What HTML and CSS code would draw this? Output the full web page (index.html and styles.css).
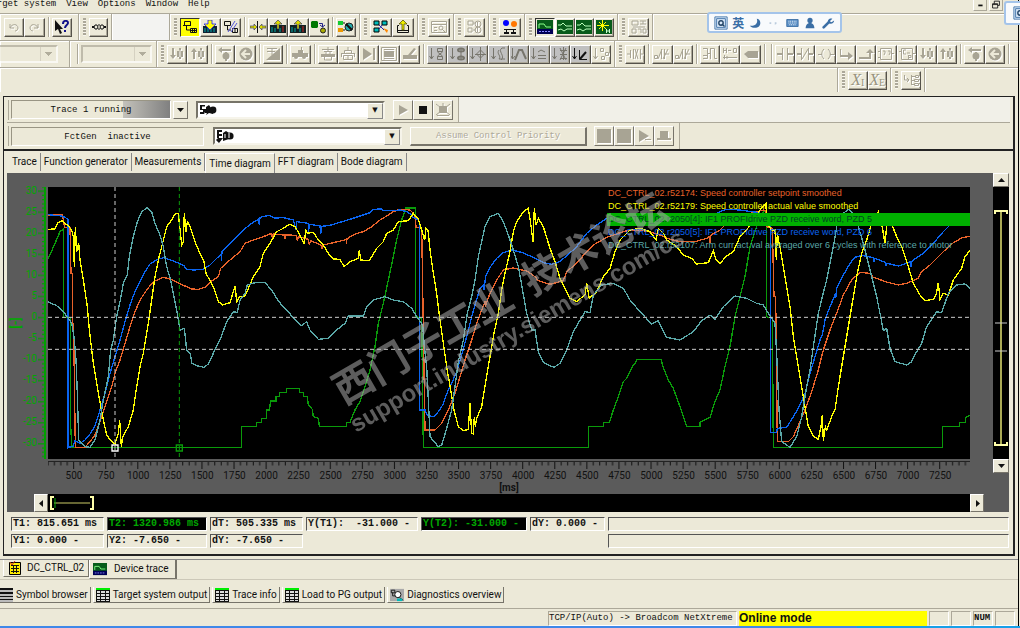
FILE: index.html
```html
<!DOCTYPE html>
<html lang="en">
<head>
<meta charset="utf-8">
<title>Device trace</title>
<link rel="stylesheet" href="styles.css">
</head>
<body>
<svg class="defs" aria-hidden="true">
  <symbol id="undo" viewBox="0 0 16 14"><path d="M4 4v4h4M4 8c2-5 8-4 8 0 0 2-2 3-3 3" class="l"/></symbol>
  <symbol id="redo" viewBox="0 0 16 14"><path d="M12 4v4H8M12 8C10 3 4 4 4 8c0 2 2 3 3 3" class="l"/></symbol>
  <symbol id="help" viewBox="0 0 16 14"><path d="M1 0v11l3-2 2 5 2-1-2-4h3z"/><path d="M9 4c0-4 5-4 5-1 0 2-3 2-3 5" stroke="#118" stroke-width="2" fill="none"/><path d="M10 10h2v2h-2z" fill="#118"/></symbol>
  <symbol id="chain" viewBox="0 0 16 14"><path d="M1 7h2M13 7h2" class="l2"/><path d="M4 5h2l1 2-1 2H4L3 7zM10 5h2l1 2-1 2h-2L9 7z" class="l"/><path d="M7 5h2M7 9h2" class="l"/></symbol>
  <symbol id="online" viewBox="0 0 16 14"><path d="M2.500 1.500h6v4h-6zM4.500 6v4H9" class="l"/><path d="M1 5h8v1H1z"/><path d="M8.500 8.500h6v4h-6zM10.500 8v5M12.500 8v5M8 10.500h7" class="l"/></symbol>
  <symbol id="down" viewBox="0 0 16 14"><path d="M1 6h14v7H1z" fill="#123"/><path d="M3 12V8M6 12V8M9 12V8M12 12V8" stroke="#0aa" /><path d="M6 0h4v4h4L8 10 2 4h4z" fill="#ff0" stroke="#00f" stroke-width=".7"/></symbol>
  <symbol id="offline" viewBox="0 0 16 14"><path d="M1.500 1.500h6v4h-6zM4.500 6v4H8" class="l"/><path d="M9.500 8.500h5v4h-5zM12 8v5" class="l"/><path d="M5 12 12 1M8 12l6-9" stroke="#55d"/></symbol>
  <symbol id="link" viewBox="0 0 16 14"><path d="M0 6h4V4l3 3-3 3V8H0zM16 6h-4V4L9 7l3 3V8h4z" fill="#dd0" stroke="#226" stroke-width=".6"/><path d="M7.500 1v12" class="l"/></symbol>
  <symbol id="load" viewBox="0 0 16 14"><path d="M0 5h16v8H0z" fill="#122"/><path d="M2 12V7M5 12V8M10 12V8" stroke="#0aa"/><path d="M13 6v6" stroke="#c22"/><path d="M8 0l4 4H9v5H7V4H4z" fill="#dd0" stroke="#226" stroke-width=".6"/></symbol>
  <symbol id="copyram" viewBox="0 0 16 14"><path d="M1 1h5l1 1v5L6 8H1L0 7V2z" fill="#070"/><path d="M8 3.500h3.500V7M9 5l2.500 2L14 5" stroke="#228" fill="none"/><circle cx="12" cy="10.500" r="2.500" fill="#aa0" stroke="#222"/></symbol>
  <symbol id="stopnet" viewBox="0 0 16 14"><path d="M0 1h5v4H0z" fill="#1c3"/><path d="M0 8h5v4H0z" fill="#e90"/><path d="M5 3h2M5 10h2" class="l"/><circle cx="11" cy="7" r="4" fill="#2aa" stroke="#222"/><path d="M8 4l6 6" class="l2"/></symbol>
  <symbol id="net" viewBox="0 0 16 14"><path d="M1 1h5v4H1zM9 1h5v4H9zM1 8h5v4H1z" fill="#0bb" stroke="#000"/><path d="M6 5l5 5M9 5L6 9" stroke="#22a"/><path d="M10 8l4 5 1-3z" fill="#f80"/></symbol>
  <symbol id="export" viewBox="0 0 16 14"><path d="M4 5.500H2.500v7h11v-7H12M2 10.500h12" class="l"/><path d="M8 0l4 4H9v6H7V4H4z" fill="#ee0" stroke="#440" stroke-width=".7"/></symbol>
  <symbol id="find" viewBox="0 0 16 14"><path d="M.500 1.500h15v11H.500zM1 4.500h14M3 7.500h3M3 10.500h3" class="l"/><circle cx="10" cy="8" r="2" class="l"/><path d="M11 9l3 3" class="l"/></symbol>
  <symbol id="gears" viewBox="0 0 16 14"><path d="M1 1h5v4H1zM1 8h4v4H1zM6 3h3M6 10h3" class="l"/><circle cx="11" cy="4" r="3" class="l"/><circle cx="11" cy="10" r="3" class="l"/><path d="M10.500 2v10" class="l"/></symbol>
  <symbol id="users" viewBox="0 0 16 14"><circle cx="4" cy="3" r="3" fill="#00f"/><circle cx="12" cy="4" r="3" fill="#f70"/><path d="M2 9h12v1H2zM4 9h1v4H4zM11 9h1v4h-1zM2 12h5v2H2zM9 12h5v2H9z"/></symbol>
  <symbol id="trace" viewBox="0 0 16 14"><path d="M0 0h16v14H0z" fill="#075c1a"/><path d="M0 9h16v5H0z" fill="#005"/><path d="M2 8V4h5l2 3h5" stroke="#8f8" fill="none"/><path d="M2 11.500h12" stroke="#88f" stroke-dasharray="2 1"/></symbol>
  <symbol id="scope" viewBox="0 0 16 14"><path d="M0 0h16v14H0z" fill="#075c1a"/><path d="M1 5h3l2-2 3 3h6M1 10l3-1 3 2 3-2h5" stroke="#bfb" fill="none"/></symbol>
  <symbol id="spark" viewBox="0 0 16 14"><path d="M0 0h16v14H0z" fill="#075c1a"/><path d="M6.500 0v11M1 5.500h12M3 2l7 7M10 2L3 9" stroke="#ff0"/><path d="M10.500 9v4M13.500 9v4M11 11h3" stroke="#cfc"/></symbol>
  <symbol id="blocks" viewBox="0 0 16 14"><path d="M1 1h6v4H1zM9 1h6M9 4h6M12 1v3M2 7h12M1 9h4v4H1zM7 9h3v4M12 9h3v4h-3z" class="l"/></symbol>
  <symbol id="d01" viewBox="0 0 16 14"><path d="M3 1h2v7h2l-3 4-3-4h2zM10 1h2v2h-2z"/><path d="M10 10h2v2h-2zM8 4h2v6H8zM12 4h2v6h-2zM10.500 3h1v8h-1z"/></symbol>
  <symbol id="u01" viewBox="0 0 16 14"><path d="M3 12h2V5h2L4 1 1 5h2zM10 1h2v2h-2z"/><path d="M10 10h2v2h-2zM8 4h2v6H8zM12 4h2v6h-2zM10.500 3h1v8h-1z"/></symbol>
  <symbol id="back0" viewBox="0 0 16 14"><path d="M1 3l4-3v2h9v2H5v2z"/><circle cx="9" cy="9" r="3.500"/><path d="M8 5h2v9H8z"/></symbol>
  <symbol id="circ" viewBox="0 0 16 14"><circle cx="8" cy="7" r="6.500"/><path d="M12 7H5M8 3L4 7l4 4" stroke="#ece9d8" stroke-width="2" fill="none"/></symbol>
  <symbol id="ramp" viewBox="0 0 16 14"><path d="M1 13L15 1v12z"/><path d="M2 1.500h10M2 4.500h8M7 1v7" class="l"/></symbol>
  <symbol id="car" viewBox="0 0 16 14"><path d="M0 6h6V3h5v3h5v4H0z"/><circle cx="4" cy="10" r="2"/><circle cx="12" cy="10" r="2"/><path d="M9.500 0v5" class="l"/></symbol>
  <symbol id="press" viewBox="0 0 16 14"><path d="M2 2.500h12M8 0v4M4 4.500h8M4.500 10v3h7v-3M6 5v3M10 5v3" class="l"/><path d="M1 7h14v3H1z"/></symbol>
  <symbol id="module" viewBox="0 0 16 14"><path d="M8 0v3M4.500 3.500h7v3h-7zM1 6.500h14M1.500 6v4M14.500 6v4M3.500 8.500h9v4h-9zM8 8v5" class="l"/></symbol>
  <symbol id="next" viewBox="0 0 16 14"><path d="M2 1l9 6-9 6zM12 1h2v12h-2z"/></symbol>
  <symbol id="screen" viewBox="0 0 16 14"><path d="M.500 .500h15v13H.500zM3 2.500h10M3 11.500h10" class="l"/><path d="M3 4h10v6H3z"/></symbol>
  <symbol id="hand" viewBox="0 0 16 14"><path d="M1 8h14v4H1zM6 8l6-7 2 1-5 6z"/></symbol>
  <symbol id="f1" viewBox="0 0 16 14"><path d="M2.500 1v11M.500 9l2 3 2-3M8.500 1.500h5v3h-5zM8.500 9.500h5v3h-5zM8.500 5l5 4M13.500 5l-5 4" class="l"/></symbol>
  <symbol id="f2" viewBox="0 0 16 14"><path d="M2.500 1v11M.500 9l2 3 2-3M11 2v10" class="l"/><ellipse cx="11" cy="3" rx="3" ry="1.500" class="l2"/><ellipse cx="11" cy="11" rx="3" ry="1.500" class="l2"/></symbol>
  <symbol id="f3" viewBox="0 0 16 14"><path d="M2.500 1v11M.500 9l2 3 2-3M10.500 0v14M5 7.500h11M10.500 3l4 4-4 4-4-4z" class="l"/></symbol>
  <symbol id="f4" viewBox="0 0 16 14"><path d="M2.500 1v11M.500 9l2 3 2-3M14 1h-3c-5 3 4 8-1 12M8 3c-3 4 3 6 0 9h6" class="l"/></symbol>
  <symbol id="f5" viewBox="0 0 16 14"><path d="M1.500 1v11M0 9l1.500 3L4 9" class="l"/><path d="M4 13L8 3h3l4 9" class="l2"/></symbol>
  <symbol id="f6" viewBox="0 0 16 14"><path d="M2.500 1v11M.500 9l2 3 2-3M7 5l3-2 4 2M7 8.500h8M7 11.500h8" class="l"/></symbol>
  <symbol id="f7" viewBox="0 0 16 14"><path d="M2.500 1v11M.500 9l2 3 2-3M8 3.500h7M8 7.500h7M8 11.500h7M11.500 0v13M8 1l6 12M14 1L8 13" class="l"/></symbol>
  <symbol id="f8" viewBox="0 0 16 14"><path d="M2.500 1v11M.500 9l2 3 2-3M7.500 3v9.500H15" class="l"/><path d="M8 12l6-7" class="l2"/></symbol>
  <symbol id="f9" viewBox="0 0 16 14"><path d="M2.500 1v11M.500 9l2 3 2-3M7.500 1.500h3v3h-3zM12.500 5.500h3v3h-3zM8.500 9.500h3v3h-3z" class="l"/></symbol>
  <symbol id="w1" viewBox="0 0 16 14"><path d="M0 7h3M3.500 3v8M6.500 2v10M8 2l3 10M11 2L8 12M13.500 2v10M13 7h3" class="l"/></symbol>
  <symbol id="w2" viewBox="0 0 16 14"><path d="M.500 8.500h3v3h-3zM4 12L8 2M7.500 2v10M10.500 2v10M10 7h5M9 12l5-10" class="l"/></symbol>
  <symbol id="w3" viewBox="0 0 16 14"><path d="M1 1.500h4.500v10H1M8.500 2v10M8 1.500h4.500v10H15M5 6.500h3M1 8.500h4" class="l"/></symbol>
  <symbol id="w4" viewBox="0 0 16 14"><path d="M1.500 1v5M4.500 1v5M1 3.500h3M6 3.500h3M11.500 1.500h3v4h-3zM1 10.500h14M2.500 8v4M5 9v3" class="l"/></symbol>
  <symbol id="tag" viewBox="0 0 16 14"><path d="M1 7l4-3h10v7H5z"/></symbol>
  <symbol id="no" viewBox="0 0 16 14"><path d="M0 6h5v2H0zM5 1h1v12H5zM10 1h1v12h-1zM11 6h5v2h-5z"/></symbol>
  <symbol id="nc" viewBox="0 0 16 14"><path d="M0 6h4v2H0zM4 1h1v12H4zM11 1h1v12h-1zM12 6h4v2h-4z"/><path d="M5 12l6-10" class="l"/></symbol>
  <symbol id="coil" viewBox="0 0 16 14"><path d="M0 7.500h4M12 7.500h4M6 2c-3 3-3 7 0 10M10 2c3 3 3 7 0 10" class="l"/></symbol>
  <symbol id="br1" viewBox="0 0 16 14"><path d="M2 2h1v6h9v2H2zM10 5l5 4-5 4z"/></symbol>
  <symbol id="br2" viewBox="0 0 16 14"><path d="M1 10h10V5h2v7H1zM8 6l4-4 4 4z"/></symbol>
  <symbol id="box" viewBox="0 0 16 14"><path d="M2.500 1.500h11v11h-11zM0 4.500h2M0 10.500h2M14 6.500h2M5 4h2v2L6 8M10 4h2v2l-1 2" class="l"/></symbol>
  <symbol id="cmp" viewBox="0 0 16 14"><path d="M2.500 1.500h11v11h-11zM0 4.500h2M14 6.500h2M7 3H4.500v4H7M8 6h3M9.500 8v4M9 8.500h3v2H9" class="l"/></symbol>
  <symbol id="tree" viewBox="0 0 16 14"><path d="M1.500 2v5H6M4 5l2 2-2 2M8.500 2v10M8 3.500h4M8 7.500h3M8 11.500h3M12.500 2.500h3v2h-3zM11.500 6.500h4v2h-4zM11.500 10.500h4v2h-4z" class="l"/></symbol>
  <symbol id="play" viewBox="0 0 16 14"><path d="M4 2l9 5-9 5z"/></symbol>
  <symbol id="stop" viewBox="0 0 16 14"><path d="M4 3h8v8H4z"/></symbol>
  <symbol id="fill" viewBox="0 0 16 14"><path d="M1 0h14v14H1z"/></symbol>
  <symbol id="playl" viewBox="0 0 16 14"><path d="M3 1l10 6-10 6z"/><path d="M9 10.500h6" class="l"/></symbol>
  <symbol id="stopl" viewBox="0 0 16 14"><path d="M4 2h8v9H4z"/><path d="M1 9h14v2H1z"/></symbol>
  <symbol id="clear" viewBox="0 0 16 14"><path d="M4 3h8v7H4zM2 12h12v1H2z"/><path d="M1 1l14 11M15 1L1 12M8 0v4" class="l"/></symbol>
  <symbol id="sheet" viewBox="0 0 14 14"><path d="M0 0h14v14H0z" fill="#ddd"/><path d="M0 0h14v2H0z" fill="#0e0"/><path d="M0 2.500h14M0 5.500h14M0 8.500h14M0 11.500h14M.500 2v12M4.500 3v11M9.500 3v11M13.500 3v11M0 13.500h14" class="l"/></symbol>
  <symbol id="ledger" viewBox="0 0 14 14"><path d="M1.500 1.500h11v12h-11z" fill="#fe0" stroke="#000"/><path d="M3 4.500h8M3 7.500h8M3 10.500h8M5.500 4v8M8.500 4v8" class="l"/><path d="M2 1l2 3 3-4" stroke="#c22" fill="none"/></symbol>
  <symbol id="symbols" viewBox="0 0 14 14"><path d="M0 0h14v14H0z" fill="#bbb"/><path d="M0 0h14v2H0zM0 4h14v2H0zM0 8h14v1H0zM0 11h14v1H0z"/></symbol>
  <symbol id="diag" viewBox="0 0 16 14"><path d="M0 0h16v14H0z" fill="#aaa"/><path d="M1.500 1.500h4v3h-4zM3 4v4h3M11 10l4 3" class="l"/><path d="M8 11h6v3H8z" fill="#0bb"/><circle cx="9" cy="6.500" r="3.500" fill="#fff" stroke="#000"/></symbol>
  <symbol id="ime" viewBox="0 0 16 16"><path d="M1 1h14v14H1z" fill="#dceafa" stroke="#3a6ea5"/><path d="M3 13V3h10v10z" fill="none" stroke="#3a6ea5"/><circle cx="8" cy="8" r="2.500" fill="none" stroke="#246" stroke-width="1.600"/><path d="M9 9l3 3" stroke="#246" stroke-width="1.600"/></symbol>
</svg>

<div class="window">
  <header class="menu">
    <nav><a href="#">Target system</a><a href="#">View</a><a href="#">Options</a><a href="#">Window</a><a href="#">Help</a></nav>
    <div class="winbtns"><button class="wb" aria-label="Minimize"><svg viewBox="0 0 14 11"><path d="M5 6h5" class="l2"/></svg></button><button class="wb" aria-label="Restore"><svg viewBox="0 0 14 11"><path d="M3 4h6v5H3zM5 4V1h6v5H9M3 5h6" class="l"/></svg></button></div>
  </header>

  <div class="bar">
    <div class="band b78 first off"><button aria-label="Undo"><svg><use href="#undo"/></svg></button><button aria-label="Redo"><svg><use href="#redo"/></svg></button><i class="sep"></i><button class="on" aria-label="Help"><svg><use href="#help"/></svg></button></div>
    <div class="band b33"><i class="grip"></i><button aria-label="Connect"><svg><use href="#chain"/></svg></button></div>
    <div class="band b58 pale"></div>
    <div class="band b190"><i class="grip"></i><button class="down yel" aria-label="Online"><svg><use href="#online"/></svg></button><button aria-label="Download"><svg><use href="#down"/></svg></button><button aria-label="Offline"><svg><use href="#offline"/></svg></button><i class="sep"></i><button aria-label="Compare"><svg><use href="#link"/></svg></button><button aria-label="Load"><svg><use href="#load"/></svg></button><button aria-label="Upload"><svg><use href="#load"/></svg></button><button aria-label="Copy RAM to ROM"><svg><use href="#copyram"/></svg></button><i class="sep"></i><button aria-label="Disconnect"><svg><use href="#stopnet"/></svg></button></div>
    <div class="band b58"><i class="grip"></i><button aria-label="Network"><svg><use href="#net"/></svg></button><button aria-label="Export"><svg><use href="#export"/></svg></button></div>
    <div class="band b36 off"><i class="grip"></i><button aria-label="Find"><svg><use href="#find"/></svg></button></div>
    <div class="band b35 off"><i class="grip"></i><button aria-label="Configure"><svg><use href="#gears"/></svg></button></div>
    <div class="band b36"><i class="grip"></i><button aria-label="Nodes"><svg><use href="#users"/></svg></button></div>
    <div class="band b93"><i class="grip"></i><button class="down" aria-label="Device trace"><svg><use href="#trace"/></svg></button><button aria-label="Scope"><svg><use href="#scope"/></svg></button><button aria-label="Measure"><svg><use href="#scope"/></svg></button><button aria-label="Auto tuning"><svg><use href="#spark"/></svg></button></div>
    <div class="band b35 off"><i class="grip"></i><button aria-label="Blocks"><svg><use href="#blocks"/></svg></button></div>
    <div class="band grow"></div>
  </div>

  <div class="bar">
    <div class="band b69 first"><select class="cut" disabled aria-label="Device"></select></div>
    <div class="band b87"><i class="sep"></i><select disabled aria-label="Chart"></select></div>
    <div class="band b458 off"><i class="grip"></i><button aria-label="Step in"><svg><use href="#d01"/></svg></button><button aria-label="Step out"><svg><use href="#u01"/></svg></button><i class="sep"></i><button aria-label="Reset"><svg><use href="#back0"/></svg></button><button aria-label="Back"><svg><use href="#circ"/></svg></button><i class="sep"></i><button aria-label="Ramp"><svg><use href="#ramp"/></svg></button><i class="sep"></i><button aria-label="Drive"><svg><use href="#car"/></svg></button><i class="sep"></i><button aria-label="Print"><svg><use href="#press"/></svg></button><button aria-label="Module"><svg><use href="#module"/></svg></button><button aria-label="Next"><svg><use href="#next"/></svg></button><button aria-label="Display"><svg><use href="#screen"/></svg></button><button aria-label="Edit"><svg><use href="#hand"/></svg></button><i class="sep"></i><button class="gr" aria-label="Step 1"><svg><use href="#f1"/></svg></button><button class="gr" aria-label="Step 2"><svg><use href="#f2"/></svg></button><button class="gr" aria-label="Step 3"><svg><use href="#f3"/></svg></button><button class="gr" aria-label="Step 4"><svg><use href="#f4"/></svg></button><button class="gr" aria-label="Step 5"><svg><use href="#f5"/></svg></button><button class="gr" aria-label="Step 6"><svg><use href="#f6"/></svg></button><button class="gr" aria-label="Step 7"><svg><use href="#f7"/></svg></button><button class="gr on" aria-label="Step 8"><svg><use href="#f8"/></svg></button><button aria-label="Step 9"><svg><use href="#f9"/></svg></button></div>
    <div class="band grow off"><i class="grip"></i><button aria-label="Contact"><svg><use href="#w1"/></svg></button><i class="sep"></i><button aria-label="Branch"><svg><use href="#w2"/></svg></button><button aria-label="Branch closed"><svg><use href="#w2"/></svg></button><i class="sep"></i><button aria-label="Network view"><svg><use href="#w3"/></svg></button><button aria-label="Ladder"><svg><use href="#w4"/></svg></button><button aria-label="Label"><svg><use href="#tag"/></svg></button><i class="sep"></i><i class="sep"></i><button aria-label="Open contact"><svg><use href="#no"/></svg></button><button aria-label="Closed contact"><svg><use href="#nc"/></svg></button><button aria-label="Coil"><svg><use href="#coil"/></svg></button><button aria-label="Open branch"><svg><use href="#br1"/></svg></button><button aria-label="Close branch"><svg><use href="#br2"/></svg></button><button aria-label="Empty box"><svg><use href="#box"/></svg></button><button aria-label="Comparator"><svg><use href="#cmp"/></svg></button><button aria-label="Next element"><svg><use href="#d01"/></svg></button><button aria-label="Previous element"><svg><use href="#u01"/></svg></button><i class="sep"></i><button aria-label="Reset view"><svg><use href="#back0"/></svg></button><button aria-label="Return"><svg><use href="#circ"/></svg></button><i class="sep"></i></div>
  </div>

  <div class="bar low">
    <div class="band first grow"></div>
    <div class="band b53 off"><i class="grip"></i><button class="xi" aria-label="X I">X<sub>I</sub></button><button class="xi" aria-label="X E">X<sub>E</sub></button></div>
    <div class="band b34 off"><i class="grip"></i><button aria-label="Tree"><svg><use href="#tree"/></svg></button></div>
    <div class="band b91"></div>
  </div>

  <main class="panel">
    <div class="strip">
      <i class="rail"></i>
      <div class="sunk run">Trace 1 running</div>
      <button class="arrow" aria-label="Choose trace"><svg viewBox="0 0 7 4"><path d="M0 0h7L3.500 4z"/></svg></button>
      <div class="combo"><select aria-label="Trace record"></select><svg viewBox="0 0 18 12" class="smudge"><path d="M1 1h5v2H3v2h4v5H1V8h3V6H1zM7 3l3-2 2 3 3 1-1 5-4-1-3 2z"/><circle cx="14" cy="6" r="3.400"/><path d="M3 3h4M5 9l3 1" stroke="#fff"/></svg></div>
      <div class="set off"><button aria-label="Start"><svg><use href="#play"/></svg></button><button class="on" aria-label="Stop"><svg><use href="#stop"/></svg></button><button aria-label="Clear"><svg><use href="#clear"/></svg></button></div>
      <div class="rest"></div>
    </div>
    <div class="strip second">
      <i class="rail"></i>
      <div class="sunk gen">FctGen&nbsp; inactive</div>
      <div class="combo"><select aria-label="Function generator"></select><svg viewBox="0 0 18 14" class="smudge tall"><path d="M1 0h5v2H3v2h3v2H3v2h4l-4 5-3-3 2-2H1zM7 3l3-2 3 2v6l-6 2z"/><circle cx="14" cy="6" r="3.600"/><path d="M13 3v5M9 4v4" stroke="#fff"/></svg></div>
      <button class="assume" disabled>Assume Control Priority</button>
      <div class="set off"><button aria-label="Generator off"><svg><use href="#fill"/></svg></button><button aria-label="Generator on"><svg><use href="#fill"/></svg></button><button aria-label="Generator start"><svg><use href="#playl"/></svg></button><button aria-label="Generator stop"><svg><use href="#stopl"/></svg></button></div>
      <div class="rest"></div>
    </div>

    <div class="tabs"><button>Trace</button><button>Function generator</button><button>Measurements</button><button class="cur">Time diagram</button><button>FFT diagram</button><button>Bode diagram</button></div>

    <section class="chart">
      <button class="sb up" aria-label="Scroll up"><svg viewBox="0 0 7 4"><path d="M0 4h7L3.500 0z"/></svg></button>
      <div class="yaxis">
        <b class="unit">[-]</b>
        <div class="ylabels"><span>30</span><span>25</span><span>20</span><span>15</span><span>10</span><span>5</span><span>0</span><span>-5</span><span>-10</span><span>-15</span><span>-20</span><span>-25</span><span>-30</span></div>
        <svg class="yticks" viewBox="0 0 8 646" preserveAspectRatio="none"><defs><pattern id="yt" y="8" width="8" height="50" patternUnits="userSpaceOnUse"><path d="M0 2h8M4 12h4M4 22h4M4 32h4M4 42h4" stroke="#00a000" stroke-width="3"/></pattern></defs><path d="M0 0h8v646H0z" fill="url(#yt)"/><path d="M7 0v646" stroke="#00a000" stroke-width="2"/></svg>
      </div>
      <div class="plot">
        <svg class="curves" viewBox="144 21 2766 816" preserveAspectRatio="none">
          <path class="c gn" d="M144 236L152 220 165 190 180 155 190 148V412H212V740L216 803H724V739H769V727H785V715H800V690H808L812 663H828V650H838V638H860V625H898V638H910V650H922L925 675 937 688 940 710 955 715 958 739H1040V727H1050L1065 690 1080 665 1095 620 1110 570 1125 500 1135 430 1150 370 1165 300 1180 230 1190 180 1205 120 1218 84H1247V410L1265 415 1270 803H1765V739H1810V727H1828L1840 690 1855 650 1870 605 1880 595 1895 563 1905 550 1912 538H1983L1990 563 2005 600 2020 625 2040 680 2060 739H2100V727L2130 712 2145 665 2160 630 2175 560 2190 500 2205 410 2220 350 2235 290 2250 200 2270 140 2285 100 2299 90V410L2317 415 2320 803H2827V739H2878V727H2896V712L2911 705"/>
          <path class="c or" d="M144 106L188 104 190 122 194 142 210 142 213 280 218 282 218 415 222 520 226 803 255 802 270 785 285 765 305 710 320 665 335 620 345 580 360 540 375 490 390 440 405 395 420 360 440 330 460 305 490 292 510 297 535 309 555 318 575 327 595 328 615 322 635 303 655 290 662 265 690 240 720 215 735 190 760 180 785 172 815 160 818 180 820 162 852 165 854 178 858 165 890 166 892 183 895 170 925 178 928 195 932 182 965 196 966 207 970 195 1035 180 1039 178 1039 192 1041 176 1065 162 1090 155 1115 140 1140 120 1160 108 1180 95 1200 88 1230 90 1245 105 1248 142 1265 142 1270 440 1275 750 1305 750 1325 730 1345 690 1365 640 1380 590 1395 540 1415 480 1430 430 1445 390 1455 365 1457 375 1470 340 1490 300 1510 270 1540 264 1580 273 1605 290 1615 302 1650 313 1690 302 1700 275 1730 250 1760 215 1780 195 1820 172 1860 158 1890 150 1940 153 1980 165 2010 178 2040 185 2085 185 2120 175 2130 168 2130 190 2133 165 2160 150 2180 130 2210 110 2250 100 2290 90 2298 92 2300 140 2317 145 2322 350 2327 350 2332 785 2365 785 2380 770 2400 725 2415 690 2435 635 2455 570 2470 510 2490 450 2510 400 2530 345 2555 300 2580 277 2610 280 2620 292 2660 306 2695 315 2720 310 2755 295 2765 275 2790 255 2830 215 2860 188 2885 174 2911 168"/>
          <path class="c bl" d="M144 104L165 106 180 107 195 112 204 118 204 803 220 798 225 782 240 790 255 780 270 762 285 738 300 690 315 640 330 580 345 530 360 480 375 425 390 375 405 335 420 305 435 275 450 252 470 239 490 233 510 239 530 247 552 257 558 267 580 270 610 268 630 255 650 235 664 222 664 243 666 215 690 190 720 160 750 133 775 118 778 136 780 112 808 106 822 114 850 113 880 120 888 150 890 125 925 130 925 155 930 133 960 138 962 163 965 139 990 136 1020 127 1050 118 1080 108 1110 98 1120 88 1145 87 1150 91 1180 92 1200 90 1220 95 1235 105 1240 113 1252 118 1259 125 1259 690 1275 690 1282 707 1302 710 1315 695 1330 672 1335 655 1345 630 1355 610 1370 575 1385 525 1400 470 1415 410 1425 375 1440 325 1450 315 1452 330 1457 290 1470 262 1490 235 1510 218 1535 210 1565 217 1600 232 1630 248 1655 253 1675 247 1700 228 1730 200 1760 160 1790 135 1820 115 1850 107 1880 115 1930 125 1980 130 2030 125 2080 120 2130 110 2160 95 2180 88 2220 90 2270 97 2300 105 2312 130 2312 757 2330 757 2332 745 2360 742 2375 718 2395 685 2415 640 2430 580 2445 530 2460 480 2467 465 2475 420 2490 380 2505 345 2507 355 2510 325 2530 285 2550 250 2565 232 2585 226 2620 233 2622 247 2625 235 2655 247 2658 257 2662 250 2695 258 2730 246 2733 262 2736 243 2770 220 2800 190 2830 155 2850 135 2880 120 2911 110"/>
          <path class="c ye" d="M144 148L165 147 172 130 185 122 195 130 205 138 215 150 220 170 223 260 226 140 230 215 236 190 240 240 250 300 262 380 268 450 280 550 295 640 310 720 320 765 335 785 345 792 355 760 359 720 364 800 368 770 385 740 400 690 410 620 420 560 430 520 445 430 455 360 465 290 475 240 485 200 500 140 515 120 525 102 535 100 545 195 550 185 553 100 558 155 562 125 570 140 585 185 600 220 612 245 618 280 640 320 655 365 668 375 690 368 700 335 706 318 710 368 718 350 735 348 745 325 760 290 780 260 790 220 810 190 830 155 850 145 870 132 885 140 900 165 912 190 918 150 922 160 940 157 955 180 970 195 985 220 1000 237 1020 238 1032 260 1050 245 1075 235 1078 210 1082 240 1108 242 1130 205 1150 185 1160 160 1180 150 1195 125 1225 122 1240 100 1255 118 1265 150 1274 180 1278 145 1284 150 1290 210 1300 280 1310 340 1320 420 1330 490 1340 560 1352 630 1362 690 1375 740 1390 752 1405 748 1410 670 1415 760 1420 762 1423 710 1426 740 1430 715 1445 680 1458 600 1470 530 1482 460 1495 400 1505 330 1515 280 1530 215 1540 155 1550 125 1570 95 1585 85 1592 130 1599 185 1603 85 1608 135 1615 115 1630 140 1650 205 1665 245 1680 295 1695 325 1710 355 1730 364 1755 345 1760 310 1768 355 1790 335 1810 290 1830 265 1845 215 1860 180 1890 150 1920 145 1950 155 1968 180 1975 145 1990 160 2000 180 2030 200 2050 225 2075 235 2090 252 2125 248 2140 212 2148 240 2160 250 2180 228 2200 215 2220 170 2240 150 2260 120 2280 90 2298 70 2300 130 2315 150 2325 150 2329 240 2332 160 2337 190 2340 200 2355 290 2370 380 2380 470 2395 560 2410 650 2425 740 2440 768 2455 778 2463 740 2467 705 2470 783 2476 740 2480 750 2495 710 2505 690 2515 620 2525 560 2535 500 2550 410 2560 350 2572 280 2585 220 2600 180 2615 130 2635 95 2645 130 2655 190 2660 140 2670 120 2690 170 2705 200 2725 260 2740 310 2760 345 2775 362 2800 358 2808 345 2815 308 2820 358 2830 340 2845 345 2860 300 2885 265 2895 230 2911 210"/>
          <path class="c te" d="M144 366L170 377 190 395 205 415 215 430 222 470 228 540 232 640 236 780 255 800 270 802 285 780 300 720 312 650 325 590 332 510 340 480 350 410 360 365 370 310 382 285 388 230 400 170 412 125 425 95 442 83 455 95 465 130 480 165 490 200 500 260 512 300 520 340 530 390 540 450 553 445 560 510 570 520 576 550 590 557 612 562 625 552 640 520 660 480 680 425 700 395 712 397 720 360 735 340 742 315 765 308 795 308 815 330 830 355 845 375 865 395 880 415 905 437 920 425 930 450 955 478 985 475 1010 450 1035 430 1045 408 1090 408 1100 380 1120 360 1155 350 1180 360 1210 365 1235 385 1250 410 1268 435 1273 500 1280 560 1286 680 1290 770 1315 800 1325 795 1340 745 1355 690 1365 620 1375 545 1390 480 1402 400 1415 350 1425 300 1435 230 1445 185 1455 140 1470 110 1495 100 1510 125 1525 165 1540 210 1555 260 1565 315 1580 400 1595 450 1605 450 1615 515 1630 548 1662 562 1680 550 1700 510 1720 455 1755 395 1770 398 1780 345 1805 315 1840 310 1870 325 1890 360 1920 395 1955 432 1975 422 2000 472 2040 480 2080 455 2105 422 2130 405 2145 418 2170 380 2205 348 2240 355 2270 370 2290 375 2305 400 2325 430 2330 520 2337 690 2345 785 2370 802 2390 770 2405 710 2420 620 2430 570 2440 500 2455 400 2467 350 2480 300 2492 240 2500 200 2510 140 2530 100 2545 88 2560 100 2575 140 2590 190 2610 270 2630 350 2642 410 2650 452 2660 445 2670 505 2685 545 2720 555 2735 545 2750 515 2765 490 2780 440 2810 395 2825 398 2845 340 2870 315 2895 312 2911 325"/>
          <g stroke-width="3" stroke="#ccc" fill="none" stroke-dasharray="12 9"><path d="M144 412H2910M144 508H2910M345 21V837"/><path d="M538 21V837" stroke="#0a9a0a"/></g>
          <path d="M336 795h18v18h-18z" class="mk" stroke="#fff"/><path d="M529 795h18v18h-18z" class="mk" stroke="#0a9a0a"/>
        </svg>
        <ul class="legend"><li class="or">DC_CTRL_02.r52174: Speed controller setpoint smoothed</li><li class="ye">DC_CTRL_02.r52179: Speed controller actual value smoothed</li><li class="gn">DC_CTRL_02.r2050[4]: IF1 PROFIdrive PZD receive word, PZD 5</li><li class="bl">DC_CTRL_02.r2050[5]: IF1 PROFIdrive PZD receive word, PZD 6</li><li class="te">DC_CTRL_02.r52107: Arm curr act val averaged over 6 cycles with reference to motor</li></ul>
        <svg class="mark" viewBox="0 0 922 272" preserveAspectRatio="xMinYMin meet"><g transform="translate(308 246) rotate(-30)"><text class="cn" x="3" y="-30">西门子工业&#160;&#160;技术论坛</text><text class="url" x="0" y="0">support.industry.siemens.com/cs</text></g></svg>
      </div>
      <div class="vtrack"><svg viewBox="0 0 16 272" preserveAspectRatio="none"><path d="M8 24v234" stroke="#aa5" stroke-width="2"/><path d="M2 27v-3h12v3M2 255v3h12v-3" fill="none" stroke="#ffa" stroke-width="2"/><path d="M2 136h12M2 164h12" stroke="#ccc"/></svg></div>
      <div class="xaxis">
        <svg class="xticks" viewBox="300 0 7186 8" preserveAspectRatio="none"><defs><pattern id="xt" x="496" width="250" height="8" patternUnits="userSpaceOnUse"><path d="M4 0v8M54 0v4M104 0v4M154 0v4M204 0v4" stroke="#111" stroke-width="8"/></pattern></defs><path d="M300 0h7186v8H300z" fill="url(#xt)"/></svg>
        <div class="xlabels"><span>500</span><span>750</span><span>1000</span><span>1250</span><span>1500</span><span>1750</span><span>2000</span><span>2250</span><span>2500</span><span>2750</span><span>3000</span><span>3250</span><span>3500</span><span>3750</span><span>4000</span><span>4250</span><span>4500</span><span>4750</span><span>5000</span><span>5250</span><span>5500</span><span>5750</span><span>6000</span><span>6250</span><span>6500</span><span>6750</span><span>7000</span><span>7250</span></div>
        <b>[ms]</b>
      </div>
      <button class="sb dn" aria-label="Scroll down"><svg viewBox="0 0 7 4"><path d="M0 0h7L3.500 4z"/></svg></button>
      <button class="sb lf" aria-label="Scroll left"><svg viewBox="0 0 7 7"><path d="M5 0v7L1 3.500z"/></svg></button>
      <div class="htrack"><svg viewBox="0 0 50 18"><path d="M6 9h36" stroke="#cc6"/><path d="M6 3H3v12h3M42 3h3v12h-3" fill="none" stroke="#ffa" stroke-width="2"/><path d="M7 4v10" stroke="#0a0"/></svg></div>
      <button class="sb rt" aria-label="Scroll right"><svg viewBox="0 0 7 7"><path d="M2 0v7l4-3.500z"/></svg></button>
    </section>

    <section class="values">
      <output>T1: 815.651 ms</output><output class="hot">T2: 1320.986 ms</output><output>dT: 505.335 ms</output><output>Y(T1):&nbsp; -31.000 -</output><output class="hot">Y(T2): -31.000 -</output><output>dY: 0.000 -</output><output class="open"></output>
      <output>Y1: 0.000 -</output><output>Y2: -7.650 -</output><output>dY: -7.650 -</output><output class="open last"></output>
    </section>
  </main>

  <div class="docs"><button><svg viewBox="0 0 14 14"><use href="#ledger"/></svg>DC_CTRL_02</button><button class="cur"><svg viewBox="0 0 16 14"><use href="#trace"/></svg>Device trace</button></div>
  <div class="outs"><button><svg><use href="#symbols"/></svg>Symbol browser</button><button><svg><use href="#sheet"/></svg>Target system output</button><button><svg><use href="#sheet"/></svg>Trace info</button><button><svg><use href="#sheet"/></svg>Load to PG output</button><button><svg><use href="#diag"/></svg>Diagnostics overview</button></div>
  <footer class="status"><span class="net">TCP/IP(Auto) -&gt; Broadcom NetXtreme</span><strong>Online mode</strong><span></span><span></span><span class="num">NUM</span><span></span></footer>
</div>
<div class="task"></div>

<div class="ime"><svg viewBox="0 0 16 16"><use href="#ime"/></svg><span>英</span><svg viewBox="0 0 16 16"><path d="M10 3c2 5-2 9-8 8 5 5 13 2 12-4 0-2-2-4-4-4z" fill="#3a6ea5"/></svg><svg viewBox="0 0 16 16"><path d="M4 7h2v2H4zM10 7h2v2l-2 1z" fill="#bcd"/></svg><svg viewBox="0 0 16 16"><path d="M2 4h13v8H2z" fill="#5b8fc5" stroke="#3a6ea5"/><path d="M4 6h9M4 8h9M5 10h7" stroke="#fff" stroke-dasharray="1 1"/></svg><svg viewBox="0 0 16 16"><circle cx="8" cy="5" r="3" fill="#3a6ea5"/><path d="M3 14c0-8 10-8 10 0z" fill="#3a6ea5"/></svg><svg viewBox="0 0 16 16"><path d="M3 13l6-6" stroke="#3a6ea5" stroke-width="3" stroke-linecap="round"/><path d="M8 8C7 4 10 2 13 3l-3 3 2 1 3-2c0 3-3 5-7 3z" fill="#3a6ea5"/></svg></div>
<div class="ime side"><svg viewBox="0 0 16 16"><use href="#ime"/></svg></div>
</body>
</html>
```
FILE: styles.css
```css
* { box-sizing: border-box; }
body { margin: 0; background: #ece9d8; color: #111; font: 10px/12px Roboto, "Liberation Sans", Arial, sans-serif; overflow-x: hidden; }
button, select, output { font: inherit; color: inherit; margin: 0; padding: 0; }
button { background: #ece9d8; border: 1px solid; border-color: #fff #77746a #77746a #fff; }
a { color: inherit; text-decoration: none; }
.defs { position: absolute; width: 0; height: 0; }
.l, .l2 { fill: none; stroke: currentColor; stroke-width: 1; }
.l2 { stroke-width: 2; }
svg { display: block; fill: currentColor; }
.window { border-right: 1px solid #000; margin-right: 1px; overflow: hidden; }

/* menu */
.menu { display: flex; justify-content: space-between; height: 13px; overflow: hidden; }
.menu nav { display: flex; gap: 10px; margin-left: -14px; font: 9px/9px "Liberation Mono", monospace; }
.winbtns { display: flex; margin-right: 15px; gap: 2px; }
.wb { width: 14px; height: 11px; border-color: #fff #aca899 #aca899 #fff; border-top: 0; }
.wb svg { width: 12px; height: 10px; }

/* toolbars */
.bar { display: flex; height: 27px; border-top: 1px solid #aca899; padding-right: 3px; box-shadow: inset 0 1px #fff; }
.bar.low { height: 25px; }
.band { display: flex; align-items: center; flex: none; padding: 0 3px 0 4px; border-left: 1px solid #aca899; box-shadow: inset 1px 0 #fff; }
.band.first { border-left: 0; }
.band.pale { background: #f3f3f1; }
.grow, .band.grow { flex: 1; min-width: 0; }
.b33 { width: 33px; } .b34 { width: 34px; } .b35 { width: 35px; } .b36 { width: 36px; } .b53 { width: 53px; }
.b58 { width: 58px; } .b69 { width: 69px; } .b78 { width: 78px; } .b87 { width: 87px; } .b91 { width: 91px; }
.b93 { width: 93px; } .b190 { width: 190px; } .b458 { width: 458px; }
.b78 { padding-right: 6px; }
.grip { width: 3px; height: 18px; margin-right: 3px; flex: none; background: repeating-linear-gradient(#aca899 0 2px, #f8f6ee 2px 3px); }
.sep { width: 7px; height: 20px; flex: none; background: linear-gradient(90deg, transparent 3px, #aca899 3px 4px, #fff 4px 5px, transparent 5px); }
.band button { flex: 1 1 20px; min-width: 0; height: 19px; display: flex; align-items: center; justify-content: center; border-color: #fff #55524a #55524a #fff; box-shadow: inset -1px -1px #aca899; }
.band svg, .set svg { width: 16px; height: 14px; flex: none; }
.off button { color: #a8a494; }
.off svg { filter: drop-shadow(1px 1px 0 #fff); }
.off .on { color: #111; }
.off .on svg { filter: none; }
.band .down { border-color: #333 #fff #fff #333; box-shadow: none; }
.band .yel { background: #ff0; }
.band .gr { background: #c0c0c0; color: #77756c; }
.band .gr svg { filter: none; }
.band .gr.on { color: #111; }
.band .xi { font: italic 16px/16px "Liberation Serif", serif; align-items: flex-start; color: #98947f; text-shadow: 1px 1px #fff; }
.xi sub { font: 10px/22px "Liberation Serif", serif; }
select { appearance: none; border: 2px solid; border-color: #777468 #f6f4ea #f6f4ea #777468; border-radius: 0; height: 18px; background: #fff; }
.combo { position: relative; }
.band select { width: 71px; background: conic-gradient(from -45deg at 50% 100%, #999584 90deg, transparent 0) right 4px center / 7px 4px no-repeat, linear-gradient(#ccc8b8, #ccc8b8) right 15px center / 1px 100% no-repeat, #ece9d8; border-color: #aca899 #fff #fff #aca899; }
.band .cut { width: 58px; margin-left: -4px; border-left: 0; }

/* panel */
.panel { margin: 4px 3px 0; border: 1px solid #222; border-right-width: 2px; border-bottom-width: 2px; padding: 0 3px; }
.strip { display: flex; align-items: center; height: 26px; border-bottom: 1px solid #aca899; font: 9px/12px "Liberation Mono", monospace; }
.strip.second { height: 28px; margin: 0 -3px; padding: 0 3px; border-bottom: 2px solid #222; }
.rail { width: 2px; height: 20px; margin-right: 2px; border-right: 1px solid #aca899; }
.sunk { height: 19px; line-height: 18px; text-align: center; border: 1px solid; border-color: #999584 #fff #fff #999584; }
.run { width: 160px; background: linear-gradient(90deg, transparent 70%, #c4c2bb 70%, #808080); }
.gen { width: 193px; margin-right: 9px; }
.arrow { width: 15px; height: 18px; margin: 0 8px 0 2px; }
.arrow svg, .sb svg { width: 7px; height: 4px; margin: auto; }
.sb.lf svg, .sb.rt svg { height: 7px; }
.combo { width: 189px; margin-right: 8px; }
.combo select { width: 100%; display: block; }
.combo::after { content: "▼"; position: absolute; right: 2px; top: 2px; width: 14px; height: 14px; text-align: center; background: #ece9d8; font: 7px/12px "DejaVu Sans", sans-serif; border: 1px solid; border-color: #fff #888 #888 #fff; }
.smudge { position: absolute; left: 3px; top: 3px; width: 18px; height: 12px; }
.smudge.tall { height: 14px; }
.set { display: flex; }
.set button { width: 20px; height: 20px; display: flex; align-items: center; justify-content: center; }
.assume { width: 177px; height: 19px; margin-right: 7px; color: #aca899; border-right-width: 2px; border-bottom-width: 2px; text-shadow: 1px 1px #fff; }
.rest { flex: 1; align-self: stretch; margin-left: 5px; border-left: 1px solid #aca899; }
.strip:not(.second) .rest { background: #f1f0e8; }

.tabs { display: flex; height: 22px; padding-top: 2px; }
.tabs button { height: 18px; padding: 0 3px; border-width: 0 1px 0 0; border-color: #888; }
.tabs button:first-child { padding-left: 5px; }
.tabs .cur { height: 20px; border-left: 1px solid #fff; border-top: 1px solid #fff; }

/* chart */
.chart { display: grid; grid-template: 14px 272px 35px 18px / 41px minmax(0, 1fr) 23px 16px; margin-right: 1px; background: #5b5b5b; }
.sb { width: 14px; }
.up { grid-area: 1 / 4; width: auto; }
.dn { grid-area: 3 / 4; width: auto; height: 14px; }
.lf { grid-area: 4 / 1; justify-self: end; }
.rt { grid-area: 4 / 3; }
.yaxis { grid-area: 2 / 1; display: flex; color: #00a800; padding-right: 2px; }
.unit { width: 12px; margin-left: 3px; align-self: center; font-size: 12px; text-align: center; transform: rotate(-90deg); }
.ylabels { flex: 1; display: flex; flex-direction: column; margin: -7px 1px 5px 0; }
.ylabels span { flex: 1; display: flex; align-items: center; justify-content: flex-end; }
.yticks { width: 8px; height: 100%; }
.plot { grid-area: 2 / 2; position: relative; background: #000; overflow: hidden; }
.curves { width: 100%; height: 100%; }
.c { fill: none; stroke-width: 4; shape-rendering: crispEdges; }
.mk { fill: none; stroke-width: 4; }
.or { stroke: #e8622a; color: #e8622a; }
.ye { stroke: #ff0; color: #ff0; }
.bl { stroke: #0a64f0; color: #0a64f0; }
.te { stroke: #5aa8a8; color: #5aa8a8; }
.gn { stroke: #0a9a0a; }
.legend { position: absolute; top: 0; right: 0; width: 363px; margin: 0; padding: 0; list-style: none; white-space: nowrap; font: 9px/13px "Liberation Sans", Arial, sans-serif; }
.legend li { height: 13px; padding-left: 1px; }
.legend .gn { background: #00b000; color: #042; }
.mark { position: absolute; top: 0; left: 0; width: 100%; height: 100%; fill: #aaa; opacity: .55; }
.cn { font: bold 40px "Noto Sans CJK SC", sans-serif; }
.url { font: bold 24px "Liberation Sans", sans-serif; }
.vtrack { grid-area: 2 / 4; background: #000; }
.vtrack svg { width: 100%; height: 100%; }
.xaxis { grid-area: 3 / 2; padding-top: 2px; text-align: center; }
.xticks { width: 100%; height: 8px; border-top: 1px solid #222; }
.xlabels { display: flex; padding: 0 14px 0 10px; }
.xlabels span { flex: 1 1 0; line-height: 13px; }
.xaxis b { display: block; line-height: 12px; }
.htrack { grid-area: 4 / 2; background: #000; }
.htrack svg { width: 50px; height: 18px; }

/* readouts */
.values { display: grid; grid-template-columns: 93px 100px 93px 112px 106px 75px minmax(0, 1fr); gap: 3px; padding: 5px 1px 6px 4px; }
.values output { height: 14px; padding-left: 1px; border: 1px solid; border-color: #555 #fff #fff #555; font: bold 10px/12px "Liberation Mono", monospace; white-space: nowrap; overflow: hidden; }
.values .hot { background: #000; color: #00a800; }
.values .last { grid-column: 7; }

/* bottom bars */
.docs { display: flex; margin-top: 3px; height: 20px; border-top: 1px solid #888; }
.docs button { display: flex; align-items: center; gap: 5px; height: 17px; margin-left: 3px; width: 86px; padding-left: 4px; border-top: 0; white-space: nowrap; }
.docs .cur { height: 19px; margin-left: 0; width: 88px; gap: 7px; padding-left: 3px; border-right-width: 2px; }
.docs svg { width: 14px; height: 14px; flex: none; }
.outs { display: flex; gap: 2px; height: 30px; padding-top: 7px; border-top: 1px solid #ccc8b8; border-bottom: 1px solid #aca899; }
.outs button { display: flex; align-items: center; gap: 3px; height: 16px; padding: 0 2px; border-top: 0; white-space: nowrap; }
.outs button:first-child { padding-left: 0; margin-left: -2px; }
.outs svg { width: 14px; height: 14px; flex: none; }
.status { display: flex; justify-content: flex-end; gap: 2px; height: 17px; padding: 2px 3px 0 0; }
.status span { width: 20px; border: 1px solid; border-color: #aca899 #fff #fff #aca899; white-space: nowrap; font: 9px/13px "Liberation Mono", monospace; }
.status .net { width: 189px; }
.status .num { font-weight: bold; }
.status strong { width: 188px; background: #ff0; font: bold 12px/15px "Liberation Sans", Arial, sans-serif; }
.task { height: 2px; background: linear-gradient(90deg, #3f88e8 84%, #18a0e8 84%); }

.ime { position: absolute; right: 178px; top: 12px; width: 135px; height: 21px; display: flex; align-items: center; justify-content: space-between; padding: 0 5px; background: #f8fafc; border: 2px solid #a4c4ea; border-radius: 3px; color: #3a6ea5; font: bold 12px/16px "Noto Sans CJK SC", sans-serif; }
.ime svg { width: 14px; height: 14px; flex: none; }
.side { right: 0; top: 1px; width: 16px; height: 24px; border-right: 0; border-radius: 3px 0 0 3px; overflow: hidden; padding: 0 0 0 7px; }
```
